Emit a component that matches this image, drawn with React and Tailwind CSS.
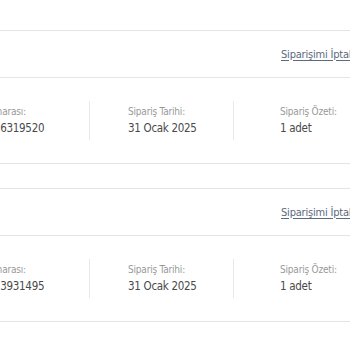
import React from "react";

const orders = [
  { no: "202501316319520", date: "31 Ocak 2025", summary: "1 adet" },
  { no: "202501313931495", date: "31 Ocak 2025", summary: "1 adet" },
];

function OrderCard({ no, date, summary }) {
  return (
    <div className="border-y border-[#e4e4e4]">
      <div className="flex h-[46px] items-center pl-[341px] pt-[2px]">
        <a className="whitespace-nowrap text-[11px] tracking-[-0.2px] text-[#5b6a80] underline underline-offset-2">
          Siparişimi İptal Et
        </a>
      </div>
      <div className="flex h-[86px] items-center border-t border-[#e4e4e4]">
        <div className="flex h-[39px] w-[149px] shrink-0 flex-col justify-center pl-[10px]">
          <p className="text-[10px] leading-[15px] tracking-[-0.2px] text-[#999]">Sipariş Numarası:</p>
          <p className="whitespace-nowrap text-[11.5px] leading-[18px] tracking-[-0.3px] text-[#4a4a4a]">{no}</p>
        </div>
        <div className="flex h-[39px] w-[144px] shrink-0 flex-col justify-center border-l border-[#e8e8e8] pl-[38px]">
          <p className="text-[10px] leading-[15px] tracking-[-0.2px] text-[#999]">Sipariş Tarihi:</p>
          <p className="text-[11.5px] leading-[18px] tracking-[-0.3px] text-[#4a4a4a]">{date}</p>
        </div>
        <div className="flex h-[39px] w-[160px] shrink-0 flex-col justify-center border-l border-[#e8e8e8] pl-[46px]">
          <p className="text-[10px] leading-[15px] tracking-[-0.2px] text-[#999]">Sipariş Özeti:</p>
          <p className="text-[11.5px] leading-[18px] tracking-[-0.3px] text-[#4a4a4a]">{summary}</p>
        </div>
      </div>
    </div>
  );
}

export default function App() {
  return (
    <div
      className="h-[350px] w-[350px] overflow-hidden bg-white font-stretch-condensed"
      style={{ fontFamily: '"DejaVu Sans", sans-serif' }}
    >
      <div className="-ml-[60px] w-[470px] pt-[30px]">
        <div className="flex flex-col gap-[24px]">
          {orders.map((o) => (
            <OrderCard key={o.no} {...o} />
          ))}
        </div>
      </div>
    </div>
  );
}
